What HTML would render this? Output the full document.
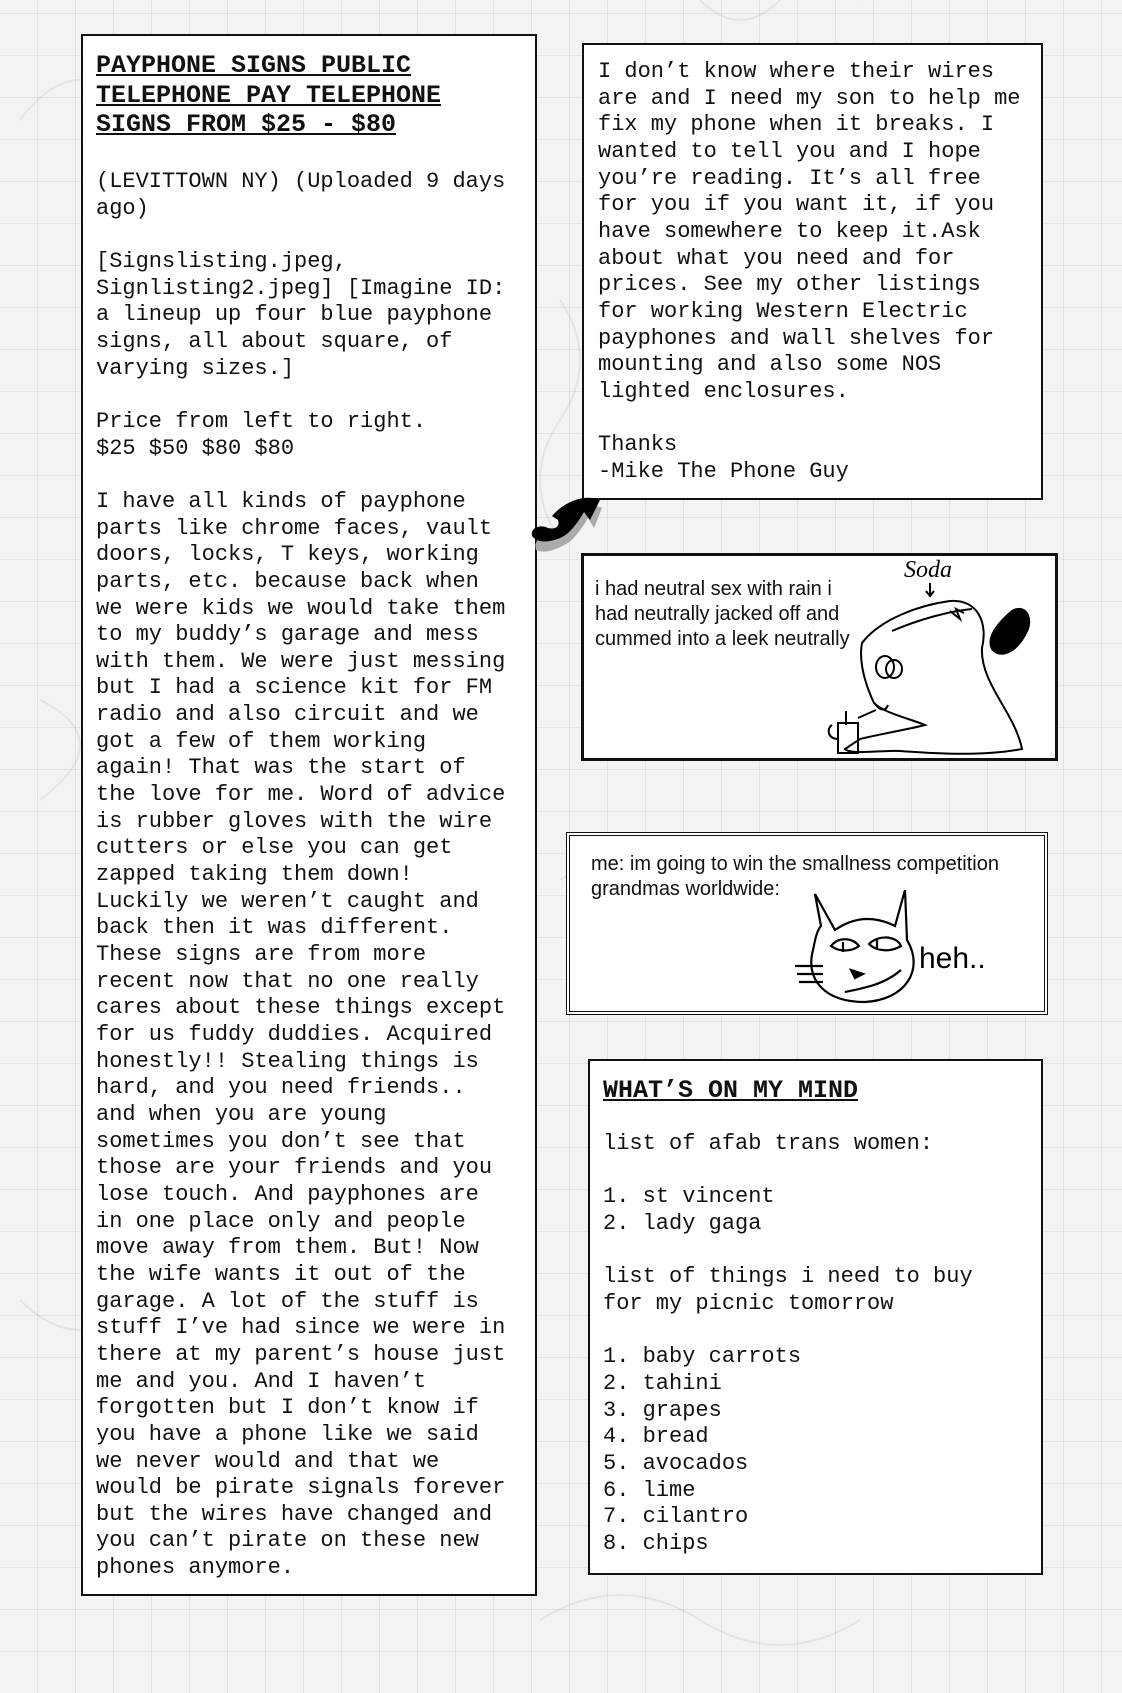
<!DOCTYPE html>
<html><head><meta charset="utf-8">
<style>
html,body{margin:0;padding:0}
body{width:1122px;height:1693px;position:relative;overflow:hidden;background:#f3f3f3;
background-image:
repeating-linear-gradient(90deg, rgba(0,0,0,0) 0 37px, rgba(0,0,0,0.07) 37px 38px),
repeating-linear-gradient(0deg, rgba(0,0,0,0) 0 41px, rgba(0,0,0,0.06) 41px 42px);
font-family:"Liberation Mono",monospace;color:#111}
.box{position:absolute;background:#fff;border:2px solid #111;box-sizing:border-box}
.t{position:absolute;white-space:pre;font-size:22px;line-height:26.65px;font-family:"Liberation Mono",monospace;margin:0}
.h{position:absolute;white-space:pre;font-size:25px;line-height:29.5px;font-weight:bold;text-decoration:underline;font-family:"Liberation Mono",monospace}
.a{position:absolute;white-space:pre;font-family:"Liberation Sans",Arial,sans-serif;font-size:20px;line-height:25px;color:#111}
</style></head><body>
<svg width="1122" height="1693" style="position:absolute;left:0;top:0" fill="none" stroke="#000" stroke-opacity="0.06" stroke-width="2">
<path d="M20 120 q60 -80 120 0 t120 0"/><path d="M560 300 q40 60 0 120 t0 120"/><path d="M40 700 q80 40 0 100"/><path d="M560 880 q60 -40 120 0 t120 0 t120 0"/><path d="M20 1300 q60 60 120 0"/><path d="M540 1620 q80 -50 160 0 t160 0"/><path d="M700 0 q40 40 80 0 t80 0"/>
</svg>

<div class="box" style="left:81px;top:34px;width:456px;height:1562px"></div>
<div class="h" style="left:96px;top:51px">PAYPHONE SIGNS PUBLIC
TELEPHONE PAY TELEPHONE
SIGNS FROM $25 - $80</div>
<div class="t" style="left:96px;top:169px">(LEVITTOWN NY) (Uploaded 9 days
ago)

[Signslisting.jpeg,
Signlisting2.jpeg] [Imagine ID:
a lineup up four blue payphone
signs, all about square, of
varying sizes.]

Price from left to right.
$25 $50 $80 $80

I have all kinds of payphone
parts like chrome faces, vault
doors, locks, T keys, working
parts, etc. because back when
we were kids we would take them
to my buddy’s garage and mess
with them. We were just messing
but I had a science kit for FM
radio and also circuit and we
got a few of them working
again! That was the start of
the love for me. Word of advice
is rubber gloves with the wire
cutters or else you can get
zapped taking them down!
Luckily we weren’t caught and
back then it was different.
These signs are from more
recent now that no one really
cares about these things except
for us fuddy duddies. Acquired
honestly!! Stealing things is
hard, and you need friends..
and when you are young
sometimes you don’t see that
those are your friends and you
lose touch. And payphones are
in one place only and people
move away from them. But! Now
the wife wants it out of the
garage. A lot of the stuff is
stuff I’ve had since we were in
there at my parent’s house just
me and you. And I haven’t
forgotten but I don’t know if
you have a phone like we said
we never would and that we
would be pirate signals forever
but the wires have changed and
you can’t pirate on these new
phones anymore.</div>

<div class="box" style="left:582px;top:43px;width:461px;height:457px"></div>
<div class="t" style="left:598px;top:59px">I don’t know where their wires
are and I need my son to help me
fix my phone when it breaks. I
wanted to tell you and I hope
you’re reading. It’s all free
for you if you want it, if you
have somewhere to keep it.Ask
about what you need and for
prices. See my other listings
for working Western Electric
payphones and wall shelves for
mounting and also some NOS
lighted enclosures.

Thanks
-Mike The Phone Guy</div>

<svg style="position:absolute;left:530px;top:488px" width="80" height="70" viewBox="0 0 80 70">
<path d="M6 62 C2 50 18 44 28 46 C34 40 40 36 34 32 C44 18 58 14 72 20 L64 40 L58 30 C52 40 44 52 36 56 C26 62 14 66 6 62Z" fill="#aaa"/>
<path d="M2 48 C0 40 10 36 18 40 C26 42 30 38 28 32 L22 28 C36 12 56 6 70 12 L60 32 L54 24 C48 34 40 46 30 50 C20 54 8 56 2 48Z" fill="#000"/>
</svg>

<div class="box" style="left:581px;top:553px;width:477px;height:208px;border-width:3px"></div>
<div class="a" style="left:595px;top:577px">i had neutral sex with rain i
had neutrally jacked off and
cummed into a leek neutrally</div>
<svg style="position:absolute;left:800px;top:553px" width="258" height="208" viewBox="0 0 258 208" fill="none" stroke="#000" stroke-width="2">
<text x="104" y="24" font-family="Liberation Serif,serif" font-size="24" font-style="italic" fill="#000" stroke="none">Soda</text>
<path d="M130 30 v12 M126 38 l4 5 4-5"/>
<path d="M62 90 C80 66 120 52 150 48 C178 46 188 70 182 95 C180 130 215 160 222 196 C180 204 130 200 100 198 C80 197 50 202 45 196 L60 186 C85 180 110 176 125 172 C108 165 84 160 74 150 C60 120 60 100 62 90Z"/>
<path d="M92 78 C120 66 150 58 172 56 M150 58 l10 8 -4 -10 8 4"/>
<path d="M76 114 a9 11 0 1 0 18 0 a9 11 0 1 0 -18 0 M86 116 a8 9 0 1 0 16 0 a8 9 0 1 0 -16 0"/>
<path d="M76 152 c4 6 10 6 12 0 M58 165 l18 -8"/>
<path d="M38 170 h20 v30 h-20z M46 158 v14 M32 172 c-6 4 -4 14 6 14"/>
<path d="M212 58 C226 50 234 66 226 80 C216 100 200 106 192 96 C186 84 198 70 212 58Z" fill="#000"/>
</svg>

<div class="box" style="left:566px;top:832px;width:482px;height:183px;border:4px double #111"></div>
<div class="a" style="left:591px;top:852px">me: im going to win the smallness competition
grandmas worldwide:</div>
<svg style="position:absolute;left:795px;top:880px" width="200" height="130" viewBox="0 0 200 130" fill="none" stroke="#000" stroke-width="2.2">
<path d="M20 14 L40 50 C60 36 80 36 100 46 L110 10 L112 60 C130 90 110 120 70 122 C30 122 10 100 18 70 C20 60 22 50 26 46 L20 14Z"/>
<path d="M36 66 c8 -10 22 -8 28 0 c-8 6 -20 6 -28 0Z M48 62 v10 M74 64 c10 -10 28 -8 32 2 c-10 6 -24 6 -32 -2Z M82 60 v10"/>
<path d="M56 90 l12 4 -8 4z" fill="#000"/>
<path d="M50 112 c20 -4 40 -8 56 -22 M0 86 h28 M2 94 h26 M4 102 h24"/>
<text x="124" y="88" font-family="Liberation Sans,sans-serif" font-size="30" fill="#000" stroke="none">heh..</text>
</svg>

<div class="box" style="left:588px;top:1059px;width:455px;height:516px"></div>
<div class="h" style="left:603px;top:1076px">WHAT’S ON MY MIND</div>
<div class="t" style="left:603px;top:1131px">list of afab trans women:

1. st vincent
2. lady gaga

list of things i need to buy
for my picnic tomorrow

1. baby carrots
2. tahini
3. grapes
4. bread
5. avocados
6. lime
7. cilantro
8. chips</div>
</body></html>
